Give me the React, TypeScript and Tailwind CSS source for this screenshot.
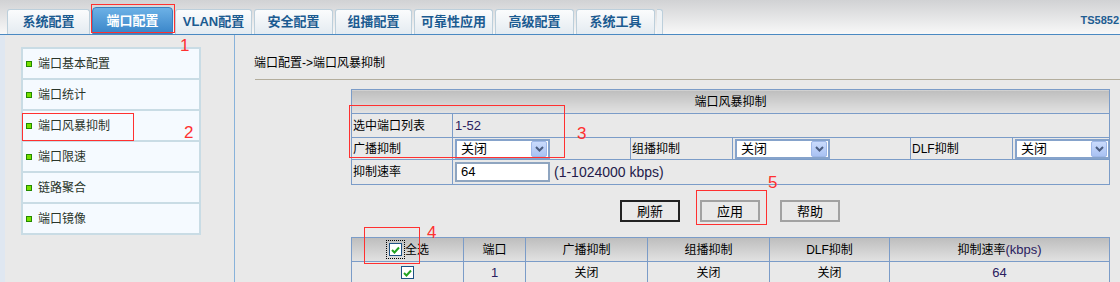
import { Fragment } from 'react';

const tabs = [
  { label: '系统配置', w: 'w-[83px]' },
  { label: '端口配置', w: 'w-[81px]', active: true },
  { label: 'VLAN配置', w: 'w-[77px]' },
  { label: '安全配置', w: 'w-[79px]' },
  { label: '组播配置', w: 'w-[77px]' },
  { label: '可靠性应用', w: 'w-[79px]' },
  { label: '高级配置', w: 'w-[79px]' },
  { label: '系统工具', w: 'w-[79px]' },
];

const menu = ['端口基本配置', '端口统计', '端口风暴抑制', '端口限速', '链路聚合', '端口镜像'];

function Select({ value }: { value: string }) {
  return (
    <div className="flex h-[20px] w-[95px] items-center justify-between border-2 border-[#86a3cb] bg-white pl-[4px] pr-[1px]">
      <span className="text-[13px] leading-none">{value}</span>
      <span className="flex h-[16px] w-[16px] items-center justify-center rounded-[2px] border border-[#9fb8e8] bg-linear-to-b from-[#cadbfc] to-[#a9c2f3]">
        <svg width="9" height="6" viewBox="0 0 9 6">
          <path d="M1 1 L4.5 4.5 L8 1" fill="none" stroke="#4b5d80" strokeWidth="2" />
        </svg>
      </span>
    </div>
  );
}

function Checkbox() {
  return (
    <span className="flex h-[13px] w-[13px] items-center justify-center border border-[#1d5184] bg-white">
      <svg width="9" height="8" viewBox="0 0 9 8">
        <path d="M1 4 L3.5 6.5 L8 1.5" fill="none" stroke="#22a322" strokeWidth="2" />
      </svg>
    </span>
  );
}

function Mark({ className, n }: { className: string; n?: string }) {
  if (n) {
    return <span className={`absolute text-[17px] leading-none text-[#ff3030] ${className}`}>{n}</span>;
  }
  return <div className={`absolute border border-[#ff3030] ${className}`} />;
}

const cell = 'border border-[#7b9cc8] p-0';

export default function App() {
  return (
    <div className="relative h-[282px] w-[1120px] overflow-hidden bg-[#e9e9e9] font-['Liberation_Sans','Noto_Sans_CJK_SC',sans-serif] text-[12px] text-black">
      {/* top tabs */}
      <header className="flex h-[35px] items-end border-b border-[#4a89c2] bg-linear-to-b from-[#d1d2d4] to-[#f8f8f8] pl-[7px]">
        <div className="flex items-end gap-[2px]">
          {tabs.map((t) =>
            t.active ? (
              <div
                key={t.label}
                className={`${t.w} flex h-[27px] items-center justify-center rounded-t-[4px] border border-[#3b7fbd] bg-linear-to-b from-[#6cb1e6] to-[#3a86c9] text-[13px] font-bold text-white`}
              >
                {t.label}
              </div>
            ) : (
              <div
                key={t.label}
                className={`${t.w} flex h-[25px] items-center justify-center rounded-t-[3px] border border-b-0 border-[#bccfdb] bg-linear-to-b from-[#fbfcfd] to-[#e4ebf1] text-[13px] font-bold text-[#1b5b91]`}
              >
                {t.label}
              </div>
            )
          )}
          <div className="h-[25px] w-[6px] rounded-tr-[3px] border border-l-0 border-b-0 border-[#bccfdb] bg-[#eef2f5]" />
        </div>
        <div className="mb-[8px] ml-auto pr-[1px] whitespace-nowrap text-[11px] font-bold leading-none text-[#1f5d92]">
          TS5852
        </div>
      </header>

      <div className="flex h-[247px]">
        {/* left menu */}
        <aside className="flex w-[235px] shrink-0 border-r border-[#88b2da]">
          <div className="w-[5px] bg-[#dfe7f1]" />
          <div className="pl-[16px] pt-[12px]">
            <div className="w-[180px] border-x-2 border-t-2 border-[#c9dce5]">
              {menu.map((m) => (
                <div
                  key={m}
                  className="flex h-[31px] items-center gap-[6px] border-b-[2px] border-[#c9dce5] bg-[#f5faff] pl-[3px] text-[12px] text-[#2a352a]"
                >
                  <span className="h-[6px] w-[6px] border border-[#238a00] bg-[#78e000]" />
                  {m}
                </div>
              ))}
            </div>
          </div>
        </aside>

        {/* content */}
        <main className="flex-1 pt-[20px]">
          <div className="pl-[19px] text-[12px] leading-[16px]">端口配置-&gt;端口风暴抑制</div>
          <div className="ml-[20px] mt-[8px] border-b border-[#b3ad9c]" />

          <table className="ml-[116px] mt-[9px] w-[758px] table-fixed border-collapse">
            <colgroup>
              <col className="w-[101px]" />
              <col className="w-[178px]" />
              <col className="w-[102px]" />
              <col className="w-[178px]" />
              <col className="w-[102px]" />
              <col className="w-[97px]" />
            </colgroup>
            <tbody>
              <tr>
                <td colSpan={6} className={`${cell} h-[24px] bg-linear-to-b from-[#bebebe] to-[#e3e3e3] text-center`}>
                  端口风暴抑制
                </td>
              </tr>
              <tr>
                <td className={`${cell} h-[24px] pl-[1px]`}>选中端口列表</td>
                <td colSpan={5} className={`${cell} pl-[2px] text-[13px] text-[#2a2060]`}>
                  1-52
                </td>
              </tr>
              <tr>
                {[
                  ['广播抑制', '关闭'],
                  ['组播抑制', '关闭'],
                  ['DLF抑制', '关闭'],
                ].map(([label, val]) => (
                  <Fragment key={label}>
                    <td className={`${cell} h-[22px] pl-[1px]`}>{label}</td>
                    <td className={`${cell} pl-[2px]`}>
                      <Select value={val} />
                    </td>
                  </Fragment>
                ))}
              </tr>
              <tr>
                <td className={`${cell} h-[25px] pl-[1px]`}>抑制速率</td>
                <td colSpan={5} className={`${cell} pl-[2px]`}>
                  <div className="flex items-center gap-[4px]">
                    <div className="flex h-[20px] w-[95px] items-center border-2 border-[#8fa5c0] bg-white pl-[4px] text-[13px]">
                      64
                    </div>
                    <span className="text-[14px] text-[#231a4a]">(1-1024000 kbps)</span>
                  </div>
                </td>
              </tr>
            </tbody>
          </table>

          <div className="ml-[116px] mt-[15px] flex w-[758px] justify-center gap-[20px]">
            <button className="h-[22px] w-[60px] border-2 border-[#222] bg-[#e9e9e9] text-[13px] leading-none">刷新</button>
            <button className="h-[22px] w-[60px] border-2 border-[#a2a2a2] bg-[#e9e9e9] text-[13px] leading-none">应用</button>
            <button className="h-[22px] w-[60px] border-2 border-[#a2a2a2] bg-[#e9e9e9] text-[13px] leading-none">帮助</button>
          </div>

          <table className="ml-[116px] mt-[15px] w-[758px] table-fixed border-collapse text-center">
            <colgroup>
              <col className="w-[112px]" />
              <col className="w-[62px]" />
              <col className="w-[122px]" />
              <col className="w-[122px]" />
              <col className="w-[120px]" />
              <col className="w-[220px]" />
            </colgroup>
            <thead>
              <tr className="bg-linear-to-b from-[#bebebe] to-[#e3e3e3]">
                <td className={`${cell} h-[24px]`}>
                  <div className="flex items-center justify-center">
                    <span className="border border-dotted border-black p-[2px]">
                      <Checkbox />
                    </span>
                    <span>全选</span>
                  </div>
                </td>
                <td className={cell}>端口</td>
                <td className={cell}>广播抑制</td>
                <td className={cell}>组播抑制</td>
                <td className={cell}>DLF抑制</td>
                <td className={cell}>
                  抑制速率<span className="text-[13px] text-[#2a2060]">(kbps)</span>
                </td>
              </tr>
            </thead>
            <tbody>
              <tr>
                <td className={`${cell} h-[22px]`}>
                  <div className="flex justify-center">
                    <Checkbox />
                  </div>
                </td>
                <td className={`${cell} text-[13px] text-[#2a2060]`}>1</td>
                <td className={cell}>关闭</td>
                <td className={cell}>关闭</td>
                <td className={cell}>关闭</td>
                <td className={`${cell} text-[13px] text-[#2a2060]`}>64</td>
              </tr>
            </tbody>
          </table>
        </main>
      </div>

      {/* red annotations */}
      <Mark className="left-[91px] top-[4px] h-[29px] w-[84px]" />
      <Mark className="left-[180px] top-[37px]" n="1" />
      <Mark className="left-[22px] top-[113px] h-[28px] w-[112px]" />
      <Mark className="left-[184px] top-[124px]" n="2" />
      <Mark className="left-[349px] top-[105px] h-[53px] w-[216px]" />
      <Mark className="left-[577px] top-[125px]" n="3" />
      <Mark className="left-[364px] top-[227px] h-[37px] w-[56px]" />
      <Mark className="left-[427px] top-[224px]" n="4" />
      <Mark className="left-[696px] top-[190px] h-[35px] w-[71px]" />
      <Mark className="left-[768px] top-[174px]" n="5" />
    </div>
  );
}
